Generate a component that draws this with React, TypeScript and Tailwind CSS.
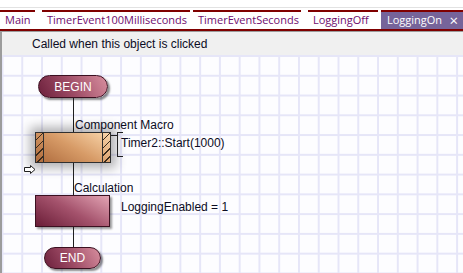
const tabs = [
  { label: "Main", width: "w-[35px]" },
  { label: "TimerEvent100Milliseconds", width: "w-[148px]" },
  { label: "TimerEventSeconds", width: "w-[108px]" },
  { label: "LoggingOff", width: "w-[70px]" },
];

function Tab({ label, width }: { label: string; width: string }) {
  return (
    <div
      className={`${width} flex h-full shrink-0 items-center overflow-hidden whitespace-nowrap border-t-2 border-[#7f0000] bg-white pl-[5px] text-[11px] text-[#6e0b6e]`}
    >
      {label}
    </div>
  );
}

function Pill({ label, className }: { label: string; className: string }) {
  return (
    <div
      className={`absolute flex items-center justify-center rounded-full border border-[#3b1020] bg-[linear-gradient(60deg,#6c203c_0%,#9c4a64_45%,#d88f9f_100%)] text-[12px] text-white shadow-[2px_2px_2px_rgba(0,0,0,0.45)] ${className}`}
    >
      {label}
    </div>
  );
}

function RightArrow() {
  return (
    <svg width="12" height="9" viewBox="0 0 12 9" className="absolute left-[22px] top-[110px]">
      <path d="M0.5 2.5 H6.5 V0.5 L11 4.5 L6.5 8.5 V6.5 H0.5 Z" fill="white" stroke="#202020" strokeWidth="1" />
    </svg>
  );
}

export default function App() {
  return (
    <div
      className="flex h-[273px] w-[463px] flex-col overflow-hidden bg-white"
      style={{ fontFamily: '"Liberation Sans", Arial, sans-serif' }}
    >
      <div className="h-[7px] shrink-0" />
      <div className="h-px shrink-0 bg-[#e2e2e2]" />
      <div className="h-[2px] shrink-0" />

      <div className="flex h-[19px] shrink-0 gap-[3px]" style={{ fontFamily: '"Open Sans", "Noto Sans", sans-serif' }}>
        <Tab {...tabs[0]} />
        <div className="w-px shrink-0" />
        <Tab {...tabs[1]} />
        <Tab {...tabs[2]} />
        <div className="w-px shrink-0" />
        <Tab {...tabs[3]} />
        <div className="flex h-full flex-1 items-center justify-between border-t-2 border-[#7f0000] bg-[#76649a] pl-[6px] pr-[5px] text-[11px] text-white">
          <span>LoggingOn</span>
          <span className="text-[15px] leading-none">×</span>
        </div>
      </div>
      <div className="h-[2px] shrink-0 bg-[#7f0000]" />

      <div className="flex flex-1 flex-col border-l-2 border-t border-[#9c9c9c]">
        <div className="flex h-[23px] shrink-0 items-center bg-[#f0f0f0] pl-[30px] text-[12px] text-[#0c0c24]">
          Called when this object is clicked
        </div>

        <div className="relative flex-1 bg-[#fdfdff] bg-[linear-gradient(to_right,#e6e6f8_1.5px,transparent_1.5px),linear-gradient(to_bottom,#e6e6f8_1.5px,transparent_1.5px)] bg-[size:19.77px_19.77px] bg-[position:-0.5px_0px] text-[12px] leading-[14px] text-[#0c0c24]">
          <Pill label="BEGIN" className="left-[36px] top-[20px] h-[23px] w-[70px]" />

          <div className="absolute left-[71px] top-[43px] h-[34px] w-px bg-[#202020]" />
          <div className="absolute left-[73px] top-[63px]">Component Macro</div>

          <div className="absolute left-[33px] top-[77px] flex h-[31px] w-[76px] border border-[#303030] bg-[linear-gradient(30deg,#ad6a3c_0%,#d79b67_50%,#fad7ac_100%)] shadow-[0_0_10px_5px_rgba(0,0,0,0.3)]">
            <div className="w-[8px] border-r border-[#303030] bg-[repeating-linear-gradient(135deg,transparent_0px,transparent_4.5px,#3a2a1a_4.5px,#3a2a1a_5.5px)]" />
            <div className="flex-1" />
            <div className="w-[8px] border-l border-[#303030] bg-[repeating-linear-gradient(135deg,transparent_0px,transparent_4.5px,#3a2a1a_4.5px,#3a2a1a_5.5px)]" />
          </div>

          <div className="absolute left-[109px] top-[80px] h-px w-[6px] bg-[#202020]" />
          <div className="absolute left-[115px] top-[77px] h-[25px] w-[6px] border-y border-l border-[#202020]" />
          <div className="absolute left-[119px] top-[81px]">Timer2::Start(1000)</div>

          <RightArrow />

          <div className="absolute left-[71px] top-[108px] h-[32px] w-px bg-[#202020]" />
          <div className="absolute left-[72px] top-[126px]">Calculation</div>

          <div className="absolute left-[33px] top-[140px] h-[32px] w-[75px] border border-[#3b1020] bg-[linear-gradient(30deg,#6a1d37_0%,#a4526c_50%,#e3a4b4_100%)] shadow-[2px_2px_2px_rgba(0,0,0,0.4)]" />
          <div className="absolute left-[119px] top-[145px]">LoggingEnabled = 1</div>

          <div className="absolute left-[71px] top-[172px] h-[20px] w-px bg-[#202020]" />
          <Pill label="END" className="left-[42px] top-[192px] h-[22px] w-[57px]" />
        </div>
      </div>
    </div>
  );
}
